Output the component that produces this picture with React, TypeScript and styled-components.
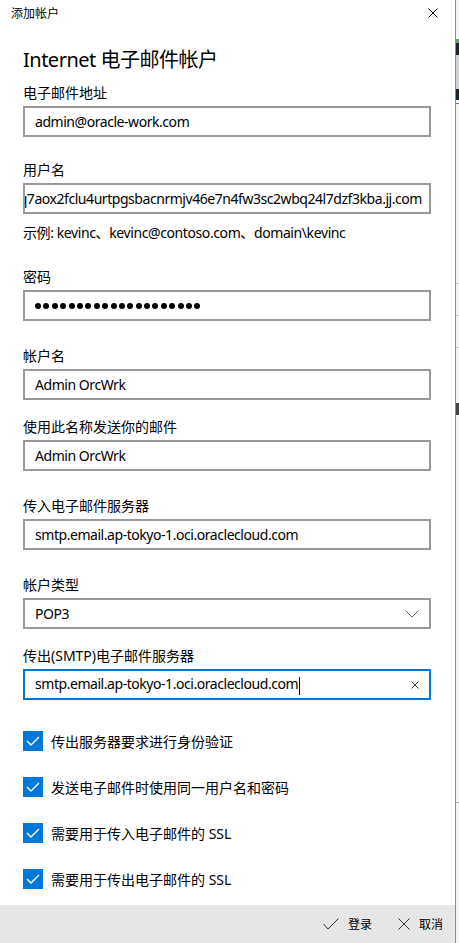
import React from 'react';
import styled, { createGlobalStyle } from 'styled-components';

const GlobalStyle = createGlobalStyle`
  html, body {
    margin: 0;
    padding: 0;
    background: #fff;
  }
  body {
    font-family: "Segoe UI", "Noto Sans", "Noto Sans CJK SC", sans-serif;
    color: #000;
  }
`;

const Page = styled.div`
  display: flex;
  flex-direction: row;
  width: 459px;
  height: 943px;
  overflow: hidden;
`;

const Dialog = styled.div`
  width: 455px;
  height: 943px;
  display: flex;
  flex-direction: column;
  background: #fff;
`;

const Edge = styled.div`
  width: 1px;
  background: #8f8f8f;
`;

const Behind = styled.div`
  width: 3px;
  display: flex;
  flex-direction: column;
  background: #f4f4f4;
`;

const Segment = styled.div<{ $h: number; $c: string }>`
  height: ${(p) => p.$h}px;
  background: ${(p) => p.$c};
  flex-shrink: 0;
`;

const TitleBar = styled.div`
  height: 26px;
  display: flex;
  align-items: center;
  padding: 0 17px 0 11px;
`;

const Title = styled.span`
  font-size: 12px;
  flex: 1;
`;

const Body = styled.div`
  flex: 1;
  padding: 0 24px 0 23px;
  display: flex;
  flex-direction: column;
`;

const Heading = styled.h1`
  margin: 20px 0 0;
  font-size: 20px;
  font-weight: 400;
  line-height: 28px;
  letter-spacing: -0.5px;
`;

const Field = styled.div<{ $top: number }>`
  margin-top: ${(p) => p.$top}px;
  display: flex;
  flex-direction: column;
`;

const Label = styled.div`
  font-size: 14px;
  line-height: 20px;
  margin-top: -2px;
  margin-bottom: 3px;
`;

const Box = styled.div<{ $active?: boolean }>`
  box-sizing: border-box;
  height: 31px;
  border: 2px solid ${(p) => (p.$active ? '#0078d7' : '#999999')};
  display: flex;
  align-items: center;
  padding: 0 10px;
  font-size: 14px;
  letter-spacing: -0.45px;
  overflow: hidden;
  white-space: nowrap;
`;

const ScrolledBox = styled(Box)`
  justify-content: flex-end;
  padding: 0 7px 0 10px;
`;

const Value = styled.span`
  flex: 1;
  white-space: nowrap;
`;

const Dots = styled.span`
  display: flex;
  gap: 2.4px;
`;

const Dot = styled.span`
  width: 6px;
  height: 6px;
  border-radius: 50%;
  background: #000;
`;

const Caret = styled.span`
  display: inline-block;
  width: 1px;
  height: 18px;
  background: #000;
  vertical-align: middle;
  margin-left: 1px;
`;

const Hint = styled.div`
  margin-top: 9px;
  font-size: 14px;
  line-height: 20px;
  letter-spacing: -0.4px;
`;

const Checks = styled.div`
  margin-top: 31px;
  display: flex;
  flex-direction: column;
  gap: 26px;
`;

const CheckRow = styled.div`
  display: flex;
  align-items: center;
  height: 20px;
  gap: 8px;
  font-size: 14px;
`;

const CheckBox = styled.span`
  width: 20px;
  height: 20px;
  background: #0078d7;
  display: flex;
  align-items: center;
  justify-content: center;
`;

const Footer = styled.div`
  height: 38px;
  background: #e6e6e6;
  display: flex;
  align-items: center;
  justify-content: flex-end;
  padding-right: 12px;
  gap: 26px;
`;

const FooterButton = styled.span`
  display: flex;
  align-items: center;
  gap: 9px;
  font-size: 12px;
`;

const Check = () => (
  <CheckBox>
    <svg width="20" height="20" viewBox="0 0 20 20">
      <path d="M4 10 L8 14 L16 6" fill="none" stroke="#fff" strokeWidth="1.4" />
    </svg>
  </CheckBox>
);

const Cross = ({ size, color }: { size: number; color: string }) => (
  <svg width={size} height={size} viewBox={`0 0 ${size} ${size}`}>
    <path d={`M0.5 0.5 L${size - 0.5} ${size - 0.5} M${size - 0.5} 0.5 L0.5 ${size - 0.5}`} fill="none" stroke={color} strokeWidth="1" />
  </svg>
);

const checks = [
  '传出服务器要求进行身份验证',
  '发送电子邮件时使用同一用户名和密码',
  '需要用于传入电子邮件的 SSL',
  '需要用于传出电子邮件的 SSL',
];

const behind = [
  { h: 39, c: '#f4f4f4' },
  { h: 4, c: '#5fa86a' },
  { h: 12, c: '#1b2430' },
  { h: 34, c: '#d0d0d0' },
  { h: 11, c: '#1b2430' },
  { h: 3, c: '#f4f4f4' },
  { h: 1, c: '#777' },
  { h: 179, c: '#f4f4f4' },
  { h: 1, c: '#cfcfcf' },
  { h: 31, c: '#f4f4f4' },
  { h: 1, c: '#cfcfcf' },
  { h: 31, c: '#f4f4f4' },
  { h: 1, c: '#cfcfcf' },
  { h: 55, c: '#f4f4f4' },
  { h: 12, c: '#444' },
  { h: 387, c: '#f4f4f4' },
  { h: 1, c: '#aaa' },
  { h: 140, c: '#f4f4f4' },
];

export default function App() {
  return (
    <>
      <GlobalStyle />
      <Page>
        <Dialog>
          <TitleBar>
            <Title>添加帐户</Title>
            <Cross size={10} color="#000" />
          </TitleBar>
          <Body>
            <Heading>Internet 电子邮件帐户</Heading>

            <Field $top={11}>
              <Label>电子邮件地址</Label>
              <Box>admin@oracle-work.com</Box>
            </Field>

            <Field $top={25}>
              <Label>用户名</Label>
              <ScrolledBox>kq7aox2fclu4urtpgsbacnrmjv46e7n4fw3sc2wbq24l7dzf3kba.jj.com</ScrolledBox>
            </Field>
            <Hint>示例: kevinc、kevinc@contoso.com、domain\kevinc</Hint>

            <Field $top={26}>
              <Label>密码</Label>
              <Box>
                <Dots>
                  {Array.from({ length: 20 }, (_, i) => (
                    <Dot key={i} />
                  ))}
                </Dots>
              </Box>
            </Field>

            <Field $top={27}>
              <Label>帐户名</Label>
              <Box>Admin OrcWrk</Box>
            </Field>

            <Field $top={19}>
              <Label>使用此名称发送你的邮件</Label>
              <Box>Admin OrcWrk</Box>
            </Field>

            <Field $top={27}>
              <Label>传入电子邮件服务器</Label>
              <Box>smtp.email.ap-tokyo-1.oci.oraclecloud.com</Box>
            </Field>

            <Field $top={27}>
              <Label>帐户类型</Label>
              <Box>
                <Value>POP3</Value>
                <svg width="14" height="8" viewBox="0 0 14 8">
                  <path d="M0.5 0.5 L7 7 L13.5 0.5" fill="none" stroke="#666" strokeWidth="1" />
                </svg>
              </Box>
            </Field>

            <Field $top={19}>
              <Label>传出(SMTP)电子邮件服务器</Label>
              <Box $active>
                <Value>
                  smtp.email.ap-tokyo-1.oci.oraclecloud.com
                  <Caret />
                </Value>
                <Cross size={8} color="#333" />
              </Box>
            </Field>

            <Checks>
              {checks.map((text) => (
                <CheckRow key={text}>
                  <Check />
                  <span>{text}</span>
                </CheckRow>
              ))}
            </Checks>
          </Body>
          <Footer>
            <FooterButton>
              <svg width="16" height="12" viewBox="0 0 16 12">
                <path d="M0.5 6 L5 11 L15.5 0.5" fill="none" stroke="#333" strokeWidth="1" />
              </svg>
              登录
            </FooterButton>
            <FooterButton>
              <Cross size={12} color="#333" />
              取消
            </FooterButton>
          </Footer>
        </Dialog>
        <Edge />
        <Behind>
          {behind.map((s, i) => (
            <Segment key={i} $h={s.h} $c={s.c} />
          ))}
        </Behind>
      </Page>
    </>
  );
}
